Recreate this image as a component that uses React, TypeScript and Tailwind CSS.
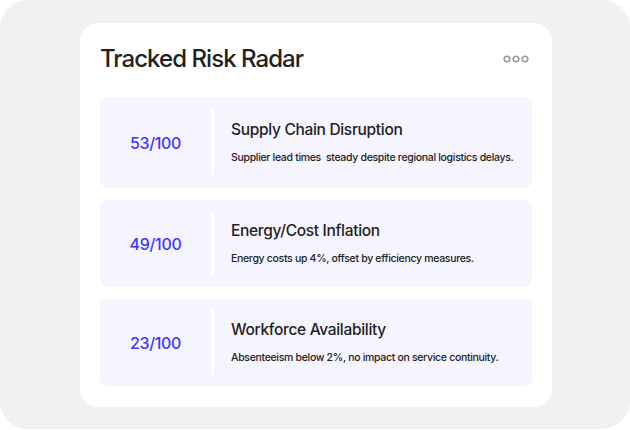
const risks = [
  {
    score: "53/100",
    title: "Supply Chain Disruption",
    body: "Supplier lead times  steady despite regional logistics delays.",
  },
  {
    score: "49/100",
    title: "Energy/Cost Inflation",
    body: "Energy costs up 4%, offset by efficiency measures.",
  },
  {
    score: "23/100",
    title: "Workforce Availability",
    body: "Absenteeism below 2%, no impact on service continuity.",
  },
];

function MoreDots() {
  return (
    <svg width="26" height="8" viewBox="0 0 26 8" fill="none" stroke="#9a9a9a" strokeWidth="1.6">
      <circle cx="4" cy="4" r="2.8" />
      <circle cx="13" cy="4" r="2.8" />
      <circle cx="22" cy="4" r="2.8" />
    </svg>
  );
}

export default function App() {
  return (
    <div className="h-[430px] w-[630px] bg-white" style={{ fontFamily: "Inter, 'Noto Sans', sans-serif" }}>
      <div className="h-[429px] w-[630px] rounded-[28px] bg-[#f1f1f1] pl-[80px] pt-[23px]">
        <div className="flex h-[384px] w-[472px] flex-col rounded-[18px] bg-white px-5 pt-[20px]">
          <div className="flex items-center justify-between pr-[3px]">
            <h1 className="text-[24px] leading-8 font-medium tracking-[-0.04em] text-[#222]">
              Tracked Risk Radar
            </h1>
            <MoreDots />
          </div>
          <div className="mt-[22px] flex flex-col gap-3">
            {risks.map((r, i) => (
              <div
                key={r.score}
                className={`flex ${i === 0 ? "h-[91px]" : "h-[87px]"} items-center rounded-lg bg-[#f5f4ff]`}
              >
                <div className="flex w-[111px] shrink-0 justify-center text-[16px] font-medium tracking-[-0.02em] text-[#3f36ff]">
                  {r.score}
                </div>
                <div className="h-[65px] w-[3px] shrink-0 bg-white" />
                <div className="-mt-[2px] flex flex-col pl-[17px]">
                  <p className="text-[15.5px] leading-6 font-medium tracking-[-0.02em] text-[#222]">{r.title}</p>
                  <p className="mt-[8px] whitespace-pre text-[10.5px] leading-4 font-medium tracking-[-0.03em] text-[#222]">{r.body}</p>
                </div>
              </div>
            ))}
          </div>
        </div>
      </div>
    </div>
  );
}
